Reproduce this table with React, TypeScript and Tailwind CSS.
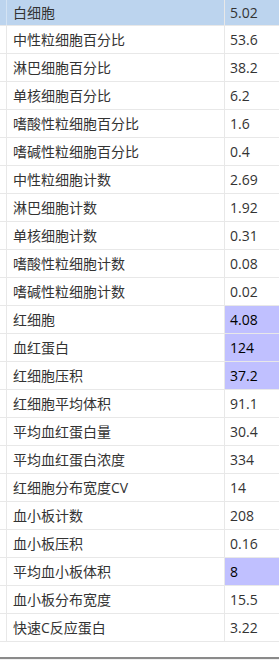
const rows: { name: string; value: string; flag?: boolean }[] = [
  { name: '白细胞', value: '5.02' },
  { name: '中性粒细胞百分比', value: '53.6' },
  { name: '淋巴细胞百分比', value: '38.2' },
  { name: '单核细胞百分比', value: '6.2' },
  { name: '嗜酸性粒细胞百分比', value: '1.6' },
  { name: '嗜碱性粒细胞百分比', value: '0.4' },
  { name: '中性粒细胞计数', value: '2.69' },
  { name: '淋巴细胞计数', value: '1.92' },
  { name: '单核细胞计数', value: '0.31' },
  { name: '嗜酸性粒细胞计数', value: '0.08' },
  { name: '嗜碱性粒细胞计数', value: '0.02' },
  { name: '红细胞', value: '4.08', flag: true },
  { name: '血红蛋白', value: '124', flag: true },
  { name: '红细胞压积', value: '37.2', flag: true },
  { name: '红细胞平均体积', value: '91.1' },
  { name: '平均血红蛋白量', value: '30.4' },
  { name: '平均血红蛋白浓度', value: '334' },
  { name: '红细胞分布宽度CV', value: '14' },
  { name: '血小板计数', value: '208' },
  { name: '血小板压积', value: '0.16' },
  { name: '平均血小板体积', value: '8', flag: true },
  { name: '血小板分布宽度', value: '15.5' },
  { name: '快速C反应蛋白', value: '3.22' },
];

export default function App() {
  return (
    <div
      className="w-[279px] h-[660px] bg-white flex flex-col overflow-hidden text-[14px]"
      style={{ fontFamily: '"Open Sans", "Noto Sans CJK SC", sans-serif' }}
    >
      <div className="flex flex-col">
        {rows.map((r, i) => {
          const selected = i === 0;
          return (
            <div
              key={r.name}
              className={`flex border-b border-[#e8e8e8] ${selected ? 'h-[26px] bg-[#bcd4ee]' : 'h-[28px]'}`}
            >
              <div className={`w-[7px] border-r ${selected ? 'border-[#d4e3f3]' : 'border-[#e8e8e8]'}`} />
              <div className="w-[218px] border-r border-[#e8e8e8] flex items-center pl-[6px] text-[#333]">
                {r.name}
              </div>
              <div
                className={`flex-1 flex items-center pl-[5px] ${r.flag ? 'bg-[#c0c0ff] text-black' : 'text-[#333]'}`}
              >
                {r.value}
              </div>
            </div>
          );
        })}
      </div>
      <div className="h-[15px]" />
      <div className="h-[2px] bg-[#8a8a8a]" />
      <div className="flex-1 bg-[#f0f0f0]" />
    </div>
  );
}
